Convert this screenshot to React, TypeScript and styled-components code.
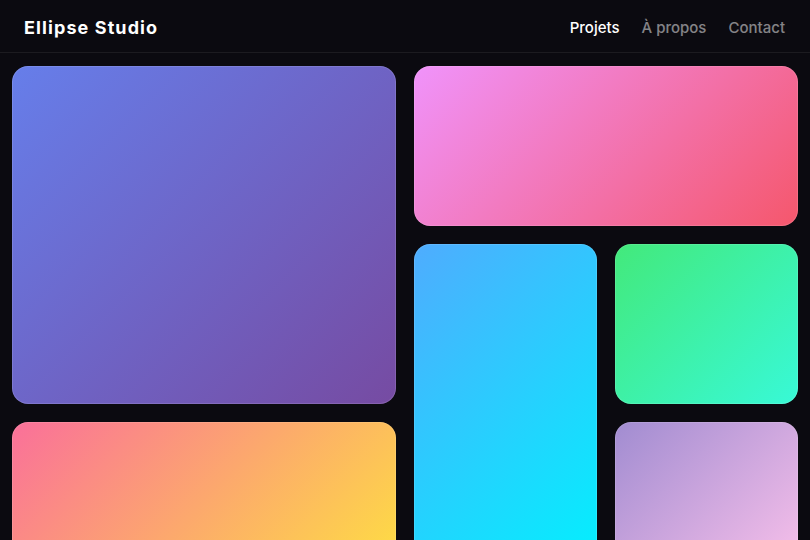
import styled, { createGlobalStyle } from "styled-components";

type Tile = {
  key: string;
  from: string;
  to: string;
  col: string;
  row: string;
};

const TILES: Tile[] = [
  { key: "indigo", from: "#667eea", to: "#764ba2", col: "1 / span 2", row: "1 / span 2" },
  { key: "rose", from: "#f093fb", to: "#f5576c", col: "3 / span 2", row: "1" },
  { key: "sky", from: "#4facfe", to: "#00f2fe", col: "3", row: "2 / span 2" },
  { key: "mint", from: "#43e97b", to: "#38f9d7", col: "4", row: "2" },
  { key: "sunset", from: "#fa709a", to: "#fee140", col: "1 / span 2", row: "3" },
  { key: "lilac", from: "#a18cd1", to: "#fbc2eb", col: "4", row: "3" },
];

const NAV = [
  { label: "Projets", active: true },
  { label: "À propos", active: false },
  { label: "Contact", active: false },
];

const GlobalStyle = createGlobalStyle`
  html, body {
    margin: 0;
    background: #0b0a10;
    font-family: Inter, "Liberation Sans", sans-serif;
    overflow: hidden;
  }
`;

export default function App() {
  return (
    <>
      <GlobalStyle />
      <Page>
        <Header>
          <Brand>Ellipse Studio</Brand>
          <Nav>
            {NAV.map((item) => (
              <NavLink key={item.label} href="#" $active={item.active}>
                {item.label}
              </NavLink>
            ))}
          </Nav>
        </Header>
        <Grid>
          {TILES.map((t) => (
            <Card key={t.key} $from={t.from} $to={t.to} $col={t.col} $row={t.row} />
          ))}
        </Grid>
      </Page>
    </>
  );
}

const Page = styled.div`
  width: 810px;
  height: 540px;
  overflow: hidden;
  background: #0b0a10;
`;

const Header = styled.header`
  box-sizing: border-box;
  height: 53px;
  display: flex;
  align-items: center;
  justify-content: space-between;
  padding: 3px 25px 0 24px;
  border-bottom: 1px solid rgba(255, 255, 255, 0.07);
`;

const Brand = styled.div`
  color: #ffffff;
  font-size: 18px;
  font-weight: 700;
  letter-spacing: 1.1px;
`;

const Nav = styled.nav`
  display: flex;
  gap: 22px;
`;

const NavLink = styled.a<{ $active: boolean }>`
  color: ${(p) => (p.$active ? "#ffffff" : "rgba(255, 255, 255, 0.5)")};
  font-size: 15px;
  font-weight: 500;
  text-decoration: none;
`;

const Grid = styled.main`
  display: grid;
  grid-template-columns: repeat(4, 183px);
  grid-auto-rows: 160px;
  gap: 18px;
  padding: 13px 12px 12px;
`;

const Card = styled.div<{ $from: string; $to: string; $col: string; $row: string }>`
  grid-column: ${(p) => p.$col};
  grid-row: ${(p) => p.$row};
  border-radius: 16px;
  background: linear-gradient(135deg, ${(p) => p.$from}, ${(p) => p.$to});
  box-shadow: inset 0 0 0 1px rgba(255, 255, 255, 0.12);
`;
